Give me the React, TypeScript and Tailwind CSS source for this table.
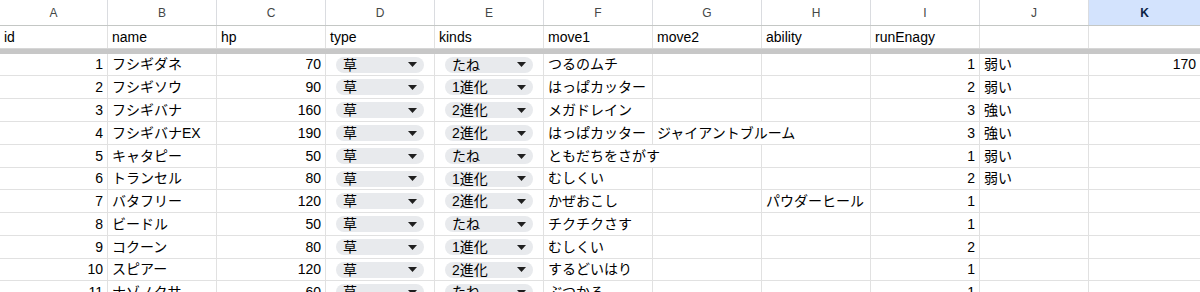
import React from 'react';

type Row = {
  id: number;
  name: string;
  hp: number;
  type: string;
  kinds: string;
  move1: string;
  move2?: string;
  ability?: string;
  run: number;
  power?: string;
  k?: number;
};

const letters = ['A', 'B', 'C', 'D', 'E', 'F', 'G', 'H', 'I', 'J', 'K'];
const headers = ['id', 'name', 'hp', 'type', 'kinds', 'move1', 'move2', 'ability', 'runEnagy', '', ''];

const rows: Row[] = [
  { id: 1, name: 'フシギダネ', hp: 70, type: '草', kinds: 'たね', move1: 'つるのムチ', run: 1, power: '弱い', k: 170 },
  { id: 2, name: 'フシギソウ', hp: 90, type: '草', kinds: '1進化', move1: 'はっぱカッター', run: 2, power: '弱い' },
  { id: 3, name: 'フシギバナ', hp: 160, type: '草', kinds: '2進化', move1: 'メガドレイン', run: 3, power: '強い' },
  { id: 4, name: 'フシギバナEX', hp: 190, type: '草', kinds: '2進化', move1: 'はっぱカッター', move2: 'ジャイアントブルーム', run: 3, power: '強い' },
  { id: 5, name: 'キャタピー', hp: 50, type: '草', kinds: 'たね', move1: 'ともだちをさがす', run: 1, power: '弱い' },
  { id: 6, name: 'トランセル', hp: 80, type: '草', kinds: '1進化', move1: 'むしくい', run: 2, power: '弱い' },
  { id: 7, name: 'バタフリー', hp: 120, type: '草', kinds: '2進化', move1: 'かぜおこし', ability: 'パウダーヒール', run: 1 },
  { id: 8, name: 'ビードル', hp: 50, type: '草', kinds: 'たね', move1: 'チクチクさす', run: 1 },
  { id: 9, name: 'コクーン', hp: 80, type: '草', kinds: '1進化', move1: 'むしくい', run: 2 },
  { id: 10, name: 'スピアー', hp: 120, type: '草', kinds: '2進化', move1: 'するどいはり', run: 1 },
  { id: 11, name: 'ナゾノクサ', hp: 60, type: '草', kinds: 'たね', move1: 'ぶつかる', run: 1 },
];

// row heights follow the ~22.7px pitch of the zoomed sheet
const heights = ['h-[22px]', 'h-[23px]', 'h-[23px]', 'h-[23px]', 'h-[23px]', 'h-[22px]', 'h-[23px]', 'h-[23px]', 'h-[23px]', 'h-[22px]', 'h-[23px]'];

const widths = ['w-[108px]', 'w-[109px]', 'w-[109px]', 'w-[109px]', 'w-[109px]', 'w-[109px]', 'w-[109px]', 'w-[109px]', 'w-[109px]', 'w-[109px]', 'w-[112px]'];

function Chip({ label }: { label: string }) {
  return (
    <div className="mx-[10px] flex h-[16px] flex-1 items-center justify-between rounded-full bg-[#e8eaed] pl-[7px] pr-[7px]">
      <span className="text-[14px] leading-none">{label}</span>
      <svg width="9" height="5" viewBox="0 0 9 5" className="shrink-0">
        <path d="M0 0h9L4.5 5z" fill="#1f1f1f" />
      </svg>
    </div>
  );
}

function Cell({
  w,
  children,
  right,
  noBorder,
}: {
  w: string;
  children?: React.ReactNode;
  right?: boolean;
  noBorder?: boolean;
}) {
  return (
    <div
      className={`${w} flex shrink-0 items-center whitespace-nowrap border-r ${
        noBorder ? 'border-r-transparent' : 'border-r-[#e1e1e1]'
      } ${right ? 'justify-end pr-[4px]' : 'pl-[4px]'}`}
    >
      {children}
    </div>
  );
}

export default function App() {
  return (
    <div
      className="h-[292px] w-[1200px] overflow-hidden bg-white text-[14px] text-black"
      style={{ fontFamily: '"Liberation Sans", "Noto Sans CJK JP", sans-serif' }}
    >
      {/* column letters */}
      <div className="flex h-[26px] border-b border-[#c4c7c5]">
        {letters.map((l, i) => (
          <div
            key={l}
            className={`${widths[i]} flex shrink-0 items-center justify-center border-r border-[#dadce0] text-[12px] ${
              l === 'K' ? 'bg-[#d3e3fd] font-bold text-[#0b1f44]' : 'text-[#444746]'
            }`}
          >
            {l}
          </div>
        ))}
      </div>

      {/* header row */}
      <div className="flex h-[22px]">
        {headers.map((h, i) => (
          <Cell key={i} w={widths[i]}>
            {h}
          </Cell>
        ))}
      </div>

      {/* frozen divider */}
      <div className="h-[6px] border-t border-[#d6d6d6] bg-[#c7c7c7]" />

      {rows.map((r, ri) => (
        <div key={r.id} className={`flex ${heights[ri]} border-b border-[#e1e1e1]`}>
          <Cell w={widths[0]} right>
            {r.id}
          </Cell>
          <Cell w={widths[1]}>{r.name}</Cell>
          <Cell w={widths[2]} right>
            {r.hp}
          </Cell>
          <div className={`${widths[3]} flex shrink-0 items-center border-r border-[#e1e1e1]`}>
            <Chip label={r.type} />
          </div>
          <div className={`${widths[4]} flex shrink-0 items-center border-r border-[#e1e1e1]`}>
            <Chip label={r.kinds} />
          </div>
          <Cell w={widths[5]} noBorder={r.id === 5}>
            {r.move1}
          </Cell>
          <Cell w={widths[6]} noBorder={!!r.move2}>
            {r.move2}
          </Cell>
          <Cell w={widths[7]}>{r.ability}</Cell>
          <Cell w={widths[8]} right>
            {r.run}
          </Cell>
          <Cell w={widths[9]}>{r.power}</Cell>
          <Cell w={widths[10]} right>
            {r.k}
          </Cell>
        </div>
      ))}
    </div>
  );
}
